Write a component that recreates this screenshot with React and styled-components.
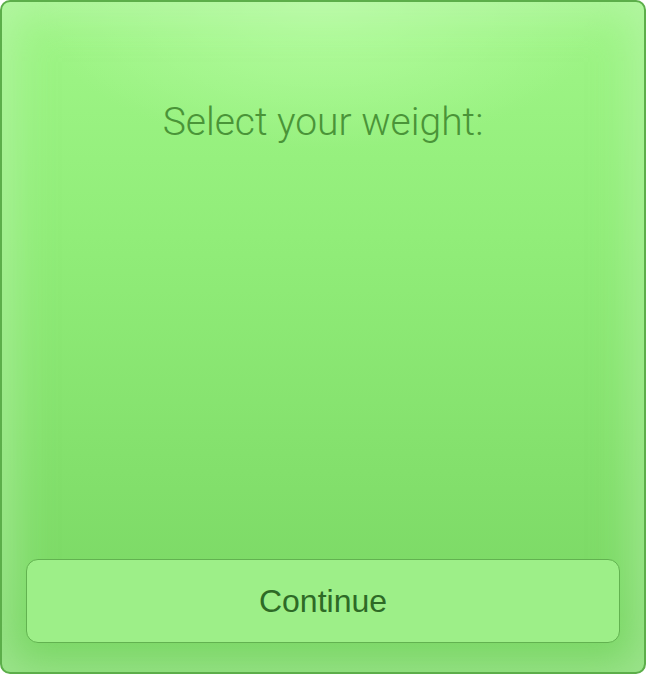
import React from 'react';
import styled, { createGlobalStyle } from 'styled-components';

const GlobalStyle = createGlobalStyle`
  html, body {
    margin: 0;
    padding: 0;
    background: #ffffff;
  }
  * {
    box-sizing: border-box;
  }
`;

const Panel = styled.div`
  display: flex;
  flex-direction: column;
  width: 646px;
  height: 674px;
  border: 2px solid #5cae4a;
  border-radius: 10px;
  overflow: hidden;
  background:
    radial-gradient(ellipse 45% 22% at 50% 0%, rgba(190, 255, 170, 0.7), rgba(190, 255, 170, 0) 100%),
    linear-gradient(180deg, #a0f688 0%, #91ed79 35%, #83e06c 70%, #77d562 100%);
  box-shadow: inset 0 0 44px 8px rgba(200, 245, 190, 0.5);
`;

const Title = styled.h1`
  margin: 0;
  padding-top: 97px;
  text-align: center;
  font-family: Roboto, "Liberation Sans", sans-serif;
  font-weight: 300;
  font-size: 39px;
  color: #4a9438;
`;

const Spacer = styled.div`
  flex: 1;
`;

const ContinueButton = styled.button`
  display: flex;
  align-items: center;
  justify-content: center;
  height: 84px;
  margin: 0 24px 29px 24px;
  border: 1.5px solid #62b250;
  border-radius: 12px;
  background: #9def88;
  font-family: "Liberation Sans", Arial, sans-serif;
  font-size: 32px;
  color: #2e6a26;
  cursor: pointer;
`;

const App = () => {
  return (
    <>
      <GlobalStyle />
      <Panel>
        <Title>Select your weight:</Title>
        <Spacer />
        <ContinueButton>Continue</ContinueButton>
      </Panel>
    </>
  );
};

export default App;
